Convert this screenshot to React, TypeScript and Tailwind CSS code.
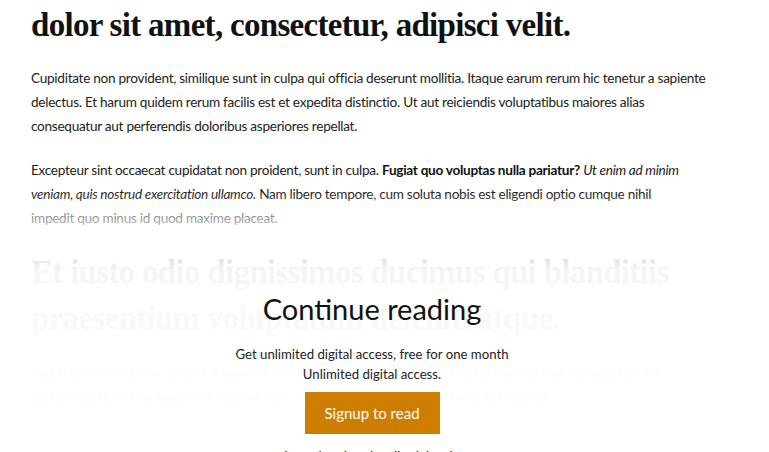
import React from "react";

// Article body with a paywall overlay fading out the rest of the text.

const SERIF = "font-['Liberation_Serif',_'Times_New_Roman',_serif]";
const BODY = "text-[13.6px] leading-[24px] tracking-[-0.28px]";

export default function App() {
  return (
    <div className="relative h-[452px] w-full overflow-hidden bg-white font-['Lato',_'Liberation_Sans',_sans-serif] text-[#222]">
      <article className="pl-[31px] pr-[56px]">
        <h1 className={`${SERIF} mt-[2px] text-[33px] font-bold leading-[46px] tracking-[-0.7px] text-[#111]`}>
          dolor sit amet, consectetur, adipisci velit.
        </h1>
        <p className={`mt-[18px] ${BODY}`}>
          Cupiditate non provident, similique sunt in culpa qui officia deserunt mollitia. Itaque earum rerum hic tenetur a sapiente
          delectus. Et harum quidem rerum facilis est et expedita distinctio. Ut aut reiciendis voluptatibus maiores alias
          consequatur aut perferendis doloribus asperiores repellat.
        </p>
        <p className={`mt-[20px] ${BODY}`}>
          Excepteur sint occaecat cupidatat non proident, sunt in culpa. <strong className="font-bold text-[#111]">Fugiat quo voluptas nulla pariatur?</strong>{" "}
          <em>Ut enim ad minim veniam, quis nostrud exercitation ullamco.</em> Nam libero tempore, cum soluta nobis est eligendi optio cumque nihil
          <br />
          impedit quo minus id quod maxime placeat.
        </p>
        <h2 className={`${SERIF} mt-[19px] text-[33px] font-bold leading-[46px] tracking-[-0.7px] text-[#111]`}>
          Et iusto odio dignissimos ducimus qui blanditiis praesentium voluptatum deleniti atque.
        </h2>
        <p className={`mt-[19px] ${BODY}`}>
          Itaque earum rerum hic tenetur a sapiente delectus, ut aut reiciendis voluptatibus maiores alias consequatur aut perferendis
          doloribus asperiores repellat. Nam libero tempore, cum soluta nobis est eligendi.
        </p>
      </article>

      {/* paywall overlay */}
      <div className="absolute inset-x-0 top-[192px] bottom-0 bg-[linear-gradient(to_bottom,rgba(255,255,255,0)_0px,rgba(255,255,255,0.65)_32px,rgba(255,255,255,0.955)_78px,rgba(255,255,255,0.985)_180px)]">
        <div className="mr-[25px] flex flex-col items-center pt-[97px] text-center">
          <h3 className="text-[29px] font-normal leading-[40px] text-[#111]">Continue reading</h3>
          <p className="mt-[16px] text-[13.2px] leading-[19.5px] text-[#222]">Get unlimited digital access, free for one month</p>
          <p className="text-[13.2px] leading-[19.5px] text-[#222]">Unlimited digital access.</p>
          <button
            type="button"
            className="mt-[8px] h-[42px] w-[135px] bg-[#cd7e00] text-[15px] text-white"
          >
            Signup to read
          </button>
          <p className="mt-[13px] text-[13.2px] leading-[19px] text-[#222]">
            I am already subscribed. Log in
          </p>
        </div>
      </div>
    </div>
  );
}
